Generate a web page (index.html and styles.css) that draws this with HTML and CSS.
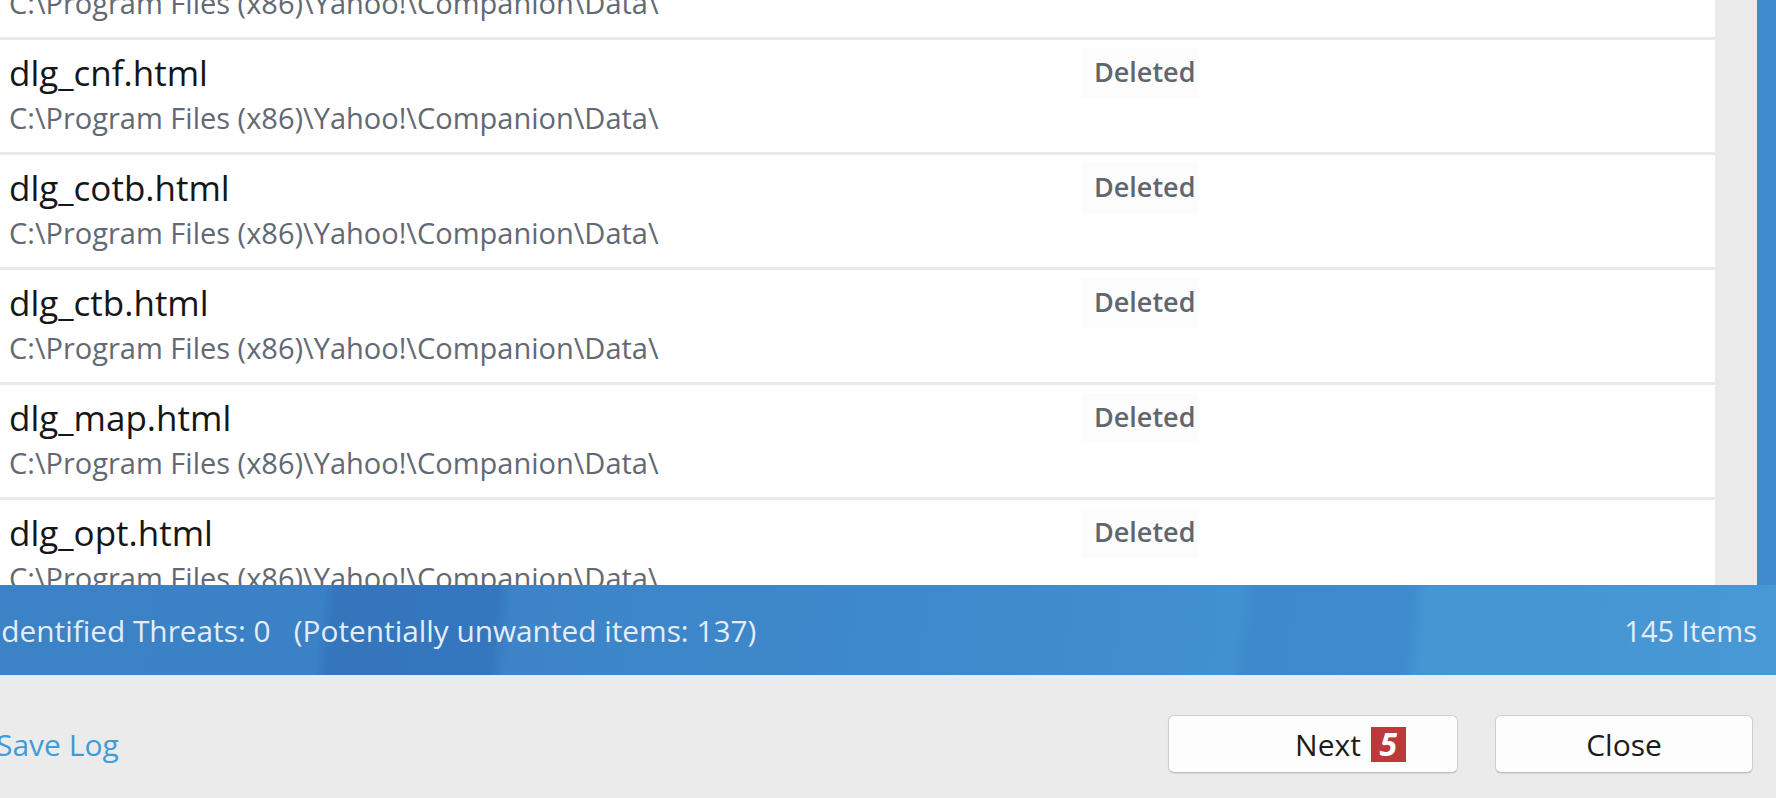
FILE: index.html
```html
<!DOCTYPE html>
<html lang="en">
<head>
<meta charset="utf-8">
<title>Scan results</title>
<link rel="stylesheet" href="styles.css">
</head>
<body>
<div class="window">
  <div class="content">
    <div class="list">
      <div class="rows">
        <div class="row">
          <div class="info">
            <div class="name">dlg_bnr.html</div>
            <div class="path">C:\Program Files (x86)\Yahoo!\Companion\Data\</div>
          </div>
          <div class="state"><span class="tag">Deleted</span></div>
        </div>
        <div class="row">
          <div class="info">
            <div class="name">dlg_cnf.html</div>
            <div class="path">C:\Program Files (x86)\Yahoo!\Companion\Data\</div>
          </div>
          <div class="state"><span class="tag">Deleted</span></div>
        </div>
        <div class="row">
          <div class="info">
            <div class="name">dlg_cotb.html</div>
            <div class="path">C:\Program Files (x86)\Yahoo!\Companion\Data\</div>
          </div>
          <div class="state"><span class="tag">Deleted</span></div>
        </div>
        <div class="row">
          <div class="info">
            <div class="name">dlg_ctb.html</div>
            <div class="path">C:\Program Files (x86)\Yahoo!\Companion\Data\</div>
          </div>
          <div class="state"><span class="tag">Deleted</span></div>
        </div>
        <div class="row">
          <div class="info">
            <div class="name">dlg_map.html</div>
            <div class="path">C:\Program Files (x86)\Yahoo!\Companion\Data\</div>
          </div>
          <div class="state"><span class="tag">Deleted</span></div>
        </div>
        <div class="row">
          <div class="info">
            <div class="name">dlg_opt.html</div>
            <div class="path">C:\Program Files (x86)\Yahoo!\Companion\Data\</div>
          </div>
          <div class="state"><span class="tag">Deleted</span></div>
        </div>
      </div>
    </div>
    <div class="track"></div>
    <div class="edge"></div>
  </div>
  <div class="statusbar">
    <span class="summary">Identified Threats: 0 &nbsp; (Potentially unwanted items: 137)</span>
    <span class="count">145 Items</span>
  </div>
  <div class="actions">
    <a class="savelog" href="#">Save Log</a>
    <div class="buttons">
      <button class="btn btn-next" type="button"><span>Next</span><span class="badge">5</span></button>
      <button class="btn btn-close" type="button">Close</button>
    </div>
  </div>
</div>
</body>
</html>
```

FILE: styles.css
```css
* { box-sizing: border-box; }

html, body {
  margin: 0;
  padding: 0;
}

body {
  width: 1776px;
  height: 798px;
  overflow: hidden;
  background: #ebebeb;
  font-family: "Open Sans", "Noto Sans", "Liberation Sans", sans-serif;
}

.window {
  display: flex;
  flex-direction: column;
  height: 798px;
}

.content {
  display: flex;
  height: 585px;
  flex: none;
}

.list {
  flex: 1;
  background: #ffffff;
  overflow: hidden;
}

.rows {
  margin-top: -75px;
}

.row {
  display: grid;
  grid-template-columns: 1072px 1fr;
  height: 115px;
  padding-left: 9px;
  border-bottom: 3px solid #e9e9e9;
}

.info {
  padding-top: 13px;
}

.name {
  font-size: 35px;
  line-height: 40px;
  color: #161616;
  white-space: nowrap;
}

.path {
  margin-top: 7px;
  font-size: 29px;
  line-height: 36px;
  color: #626973;
  white-space: nowrap;
}

.state {
  padding-top: 8px;
}

.tag {
  display: inline-block;
  padding: 6px 4px 8px 13px;
  font-size: 27px;
  line-height: 36px;
  font-weight: 600;
  color: #60666e;
  background: #fcfcfc;
}

.track {
  width: 42px;
  background: #eaeaea;
}

.edge {
  width: 19px;
  background: #3f8bcd;
}

.statusbar {
  flex: none;
  height: 90px;
  display: flex;
  align-items: center;
  justify-content: space-between;
  padding-right: 19px;
  color: #e4edf7;
  font-size: 29.8px;
  background: linear-gradient(96deg,
    #3b82c7 0px, #3a81c6 322px,
    #3475bc 336px, #3577be 496px,
    #3c84c7 512px, #3e89cb 900px,
    #4190d0 1235px, #3d89cb 1250px,
    #3e8bcd 1405px, #4595d3 1420px,
    #4798d4 1776px);
  white-space: pre;
}

.summary {
  margin-left: -7px;
}

.count {
  font-size: 29px;
}

.actions {
  flex: 1;
  display: flex;
  align-items: center;
  justify-content: space-between;
  padding: 40px 23px 25px 0;
}

.savelog {
  margin-left: -4px;
  font-size: 30px;
  color: #3f9bd9;
  text-decoration: none;
}

.buttons {
  display: flex;
  gap: 37px;
}

.btn {
  display: flex;
  align-items: center;
  justify-content: center;
  height: 58px;
  font-family: "Open Sans", "Noto Sans", "Liberation Sans", sans-serif;
  font-size: 30px;
  color: #1b1b1b;
  background: #fdfdfd;
  border: 1.5px solid #cfcfcf;
  border-bottom-color: #bdbdbd;
  border-radius: 6px;
  box-shadow: 0 1px 1px rgba(0, 0, 0, 0.08);
  padding: 0;
}

.btn-next {
  width: 290px;
  padding-left: 75px;
  gap: 10px;
}

.btn-close {
  width: 258px;
}

.badge {
  display: inline-flex;
  align-items: center;
  justify-content: center;
  width: 35px;
  height: 35px;
  background: #bc383b;
  color: #ffffff;
  font-weight: 700;
  font-style: italic;
  font-size: 32px;
  line-height: 1;
}
```
